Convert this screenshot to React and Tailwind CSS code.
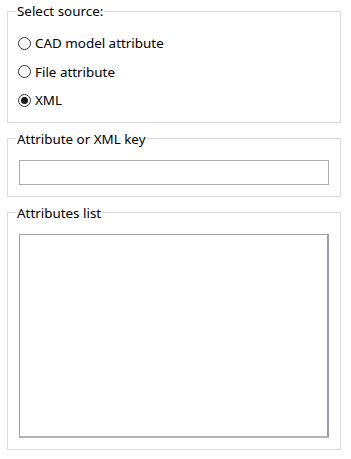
import React, { useState } from 'react';

const font = { fontFamily: '"Noto Sans", "Open Sans", sans-serif' };

const Radio = ({ label, checked, onSelect }) => (
  <label className="flex items-center h-[28.5px] cursor-default" onClick={onSelect}>
    <span className="w-[13px] h-[13px] rounded-full border border-[#333333] bg-white flex items-center justify-center">
      {checked && <span className="w-[7px] h-[7px] rounded-full bg-[#1a1a1a]" />}
    </span>
    <span className="ml-[4px] text-[13.4px] text-black">{label}</span>
  </label>
);

const Group = ({ title, className = '', children }) => (
  <fieldset className={`border border-[#dcdcdc] w-[334px] px-[8px] ${className}`}>
    <legend className="px-[1px] text-[13.4px] leading-[16px] text-black">{title}</legend>
    {children}
  </fieldset>
);

export default function App() {
  const [source, setSource] = useState('xml');

  return (
    <div className="w-[351px] h-[459px] bg-white pl-[7px] pt-[3px]" style={font}>
      <Group title="Select source:" className="pb-[7px]">
        <div className="pl-[2px] pt-[10px]">
          <Radio label="CAD model attribute" checked={source === 'cad'} onSelect={() => setSource('cad')} />
          <Radio label="File attribute" checked={source === 'file'} onSelect={() => setSource('file')} />
          <Radio label="XML" checked={source === 'xml'} onSelect={() => setSource('xml')} />
        </div>
      </Group>

      <Group title="Attribute or XML key" className="mt-[8px] pb-[11px]">
        <div className="px-[3px] pt-[13px]">
          <input
            type="text"
            className="block w-full h-[25px] border border-[#adadad] bg-white outline-none px-1 text-[13px]"
          />
        </div>
      </Group>

      <Group title="Attributes list" className="mt-[8px] pb-[11px]">
        <div className="px-[3px] pt-[13px]">
          <div className="h-[204px] border border-[#a0a4aa] border-r-2 border-b-2 border-r-[#9a9ea4] border-b-[#b0b3b8] bg-white" />
        </div>
      </Group>
    </div>
  );
}
